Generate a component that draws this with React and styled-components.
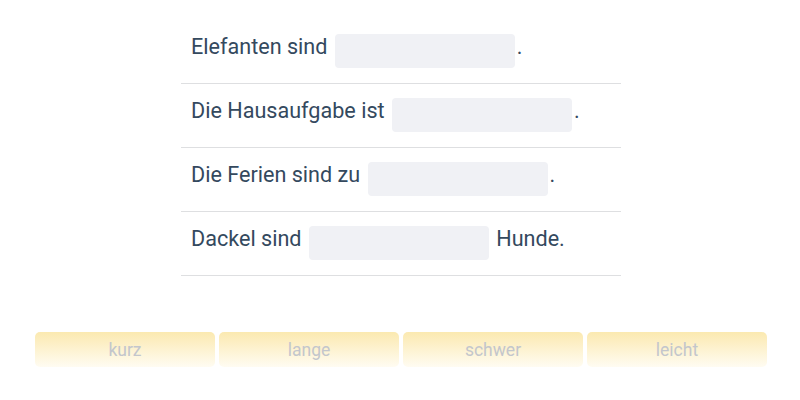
import React from "react";
import styled, { createGlobalStyle } from "styled-components";

const Global = createGlobalStyle`
  html, body { margin: 0; padding: 0; background: #fff; }
  body { font-family: Roboto, "Liberation Sans", sans-serif; }
`;

const Page = styled.div`
  width: 800px;
  height: 400px;
  display: flex;
  flex-direction: column;
  align-items: center;
  padding-top: 20px;
  box-sizing: border-box;
`;

const List = styled.div`
  width: 440px;
  margin-left: 2px;
  display: flex;
  flex-direction: column;
`;

const Row = styled.div`
  box-sizing: border-box;
  height: 64px;
  border-bottom: 1px solid #dedfe1;
  display: flex;
  align-items: flex-start;
  padding: 14px 10px 0;
  font-size: 21.6px;
  color: #34495e;
  white-space: pre;
`;

const Blank = styled.span`
  display: inline-block;
  flex: none;
  width: 180px;
  height: 34px;
  border-radius: 4px;
  background: #f0f1f5;
  margin: 0 2px 0 2px;
`;

const Bank = styled.div`
  margin-top: 56px;
  margin-left: 2px;
  display: flex;
  gap: 4px;
`;

const Chip = styled.div`
  width: 180px;
  height: 35px;
  border-radius: 5px;
  background: linear-gradient(to bottom, #fbe9b0, #fffcf2);
  display: flex;
  align-items: center;
  justify-content: center;
  font-size: 17.5px;
  color: #c3c6cc;
`;

const rows = [
  ["Elefanten sind ", "."],
  ["Die Hausaufgabe ist ", "."],
  ["Die Ferien sind zu ", "."],
  ["Dackel sind ", " Hunde."],
];

const words = ["kurz", "lange", "schwer", "leicht"];

export default function App() {
  return (
    <>
      <Global />
      <Page>
        <List>
          {rows.map(([a, b]) => (
            <Row key={a}>
              {a}
              <Blank />
              {b}
            </Row>
          ))}
        </List>
        <Bank>
          {words.map((w) => (
            <Chip key={w}>{w}</Chip>
          ))}
        </Bank>
      </Page>
    </>
  );
}
